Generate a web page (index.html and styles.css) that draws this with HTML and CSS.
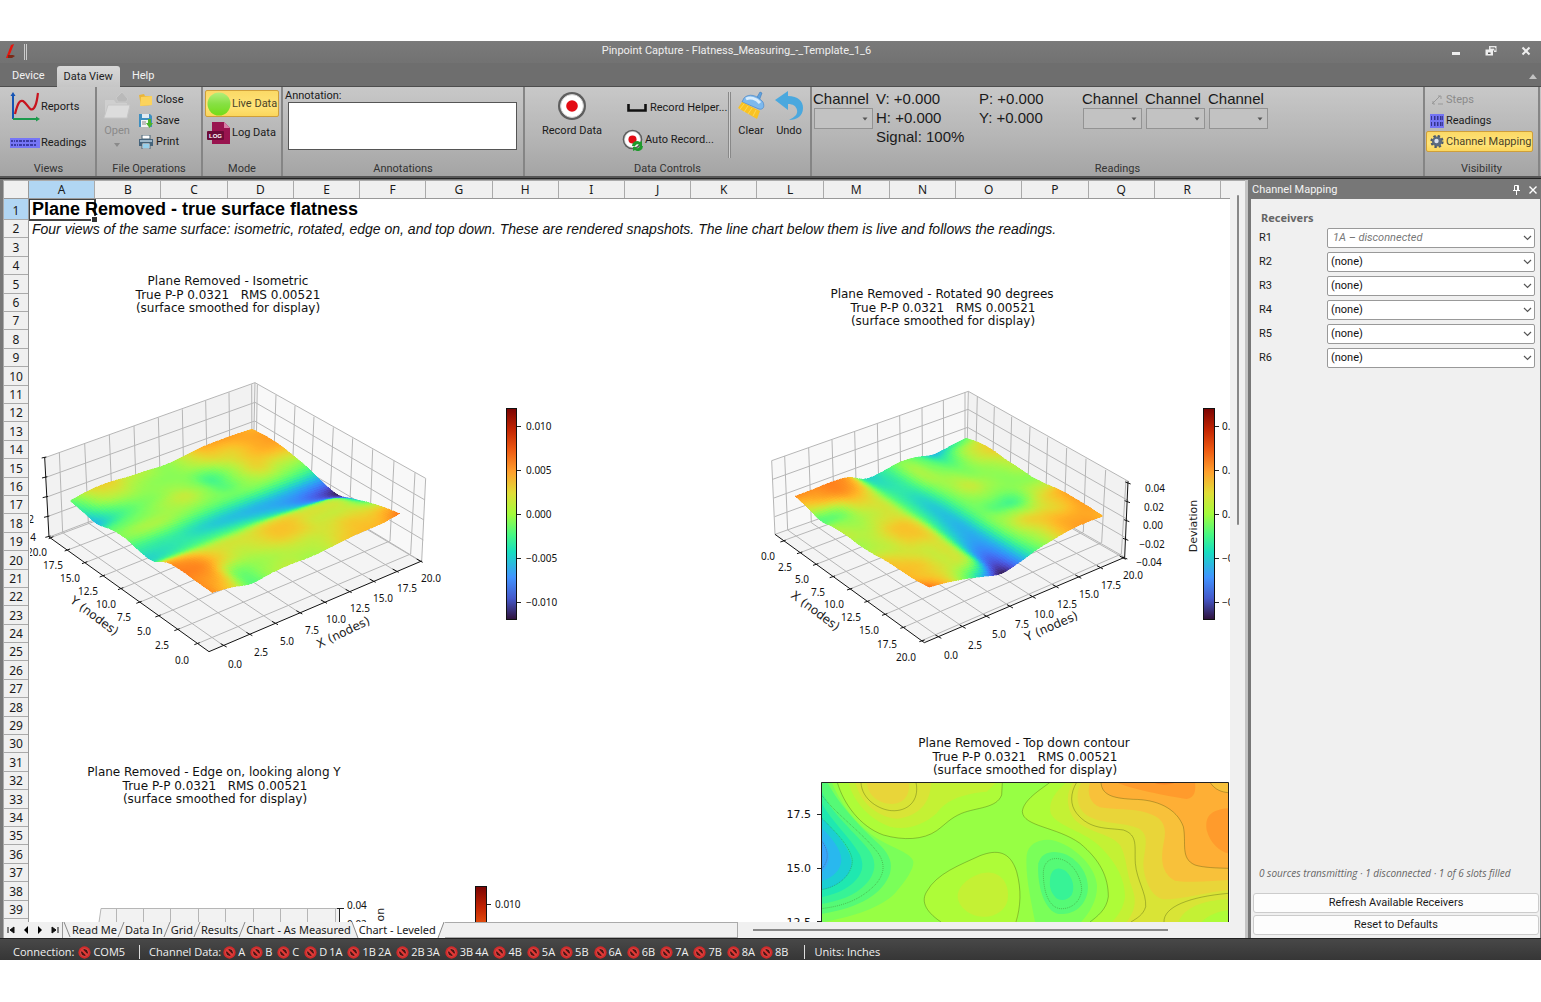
FILE: index.html
```html
<!DOCTYPE html>
<html lang="en">
<head>
<meta charset="utf-8">
<title>Pinpoint Capture - Flatness_Measuring_-_Template_1_6</title>
<link rel="stylesheet" href="styles.css">
</head>
<body>
<svg class="defs" width="0" height="0" aria-hidden="true">
  <defs>
    <linearGradient id="turbo" x1="0" y1="0" x2="0" y2="1">
      <stop offset="0" stop-color="#7a0403"/><stop offset=".1" stop-color="#c22402"/>
      <stop offset=".2" stop-color="#ee5b12"/><stop offset=".3" stop-color="#fe9f2d"/>
      <stop offset=".4" stop-color="#e1dd37"/><stop offset=".5" stop-color="#a4fc3c"/>
      <stop offset=".6" stop-color="#46f884"/><stop offset=".68" stop-color="#18dec0"/>
      <stop offset=".8" stop-color="#4294ff"/><stop offset=".9" stop-color="#4559cb"/>
      <stop offset="1" stop-color="#30123b"/>
    </linearGradient>
    <linearGradient id="ball" x1="0" y1="0" x2="0" y2="1"><stop offset="0" stop-color="#b4ee7c"/><stop offset=".5" stop-color="#86e043"/><stop offset="1" stop-color="#74dc18"/></linearGradient>
    <symbol id="blocked" viewBox="0 0 14 14">
      <circle cx="7" cy="7" r="6.6" fill="#d42a2a"/>
      <circle cx="7" cy="7" r="4.2" fill="#4a1313" stroke="#ee5a55" stroke-width="1"/>
      <path d="M3.8 3.8l6.4 6.4" stroke="#e23a36" stroke-width="2.4"/>
    </symbol>
    <symbol id="record" viewBox="0 0 30 30">
      <circle cx="15" cy="15" r="14" fill="#5e5e5e"/><circle cx="15" cy="15" r="11.4" fill="#fff"/>
      <circle cx="15" cy="15" r="11.4" fill="none" stroke="#d2d2d2"/><circle cx="15" cy="15" r="5.8" fill="#e30b13"/>
    </symbol>
    <symbol id="caret" viewBox="0 0 6 4"><path d="M0.5 0.5h5l-2.500 3z" fill="#555"/></symbol>
    <symbol id="chev" viewBox="0 0 9 6"><path d="M1 1l3.500 3.500L8 1" fill="none" stroke="#555" stroke-width="1.200"/></symbol>
    <clipPath id="contourClip"><rect x="123" y="157" width="1222" height="430"/></clipPath>
  </defs>
</svg>

<div class="app">
  <header class="titlebar">
    <div class="quick">
      <svg width="14" height="16" viewBox="0 0 14 16"><path d="M7 1L10 0 6.500 9 4 14 2 14z" fill="#e8140c"/><path d="M4 11l5 0 2 1-3 2-4 0z" fill="#7a2a18"/></svg>
      <span class="grip"></span>
    </div>
    <h1>Pinpoint Capture - Flatness_Measuring_-_Template_1_6</h1>
    <div class="winbtns">
      <button type="button" aria-label="Minimize"><svg width="12" height="12" viewBox="0 0 12 12"><path d="M2 6h8v3H2z" fill="#eee"/></svg></button>
      <button type="button" aria-label="Restore"><svg width="12" height="12" viewBox="0 0 12 12"><path d="M4 0h7.500v6H9V4.500H4z" fill="#e8e8e8"/><path d="M5.500 2h4.500v2.500" stroke="#555" fill="none"/><path d="M.5 3.500h7.500v6H.5z" fill="#eee"/><path d="M3 6.500h2.500v1.500H3z" fill="#555"/></svg></button>
      <button type="button" aria-label="Close window"><svg width="12" height="12" viewBox="0 0 12 12"><path d="M2.500 1.500l7 7M9.500 1.500l-7 7" stroke="#eee" stroke-width="2"/></svg></button>
    </div>
  </header>
  <nav class="tabs">
    <button type="button">Device</button>
    <button type="button" class="on">Data View</button>
    <button type="button">Help</button>
    <svg class="collapse" width="8" height="5" viewBox="0 0 8 5"><path d="M0 5l4-5 4 5z" fill="#c2c2c2"/></svg>
  </nav>

  <section class="ribbon">
    <div class="group g-views">
      <div class="body">
        <button type="button" class="cmd tall"><svg width="30" height="30" viewBox="0 0 30 30"><path d="M3 3v24" stroke="#1554b4" stroke-width="2"/><path d="M3 0l2.500 4h-5z" fill="#1554b4"/><path d="M3 27h24" stroke="#1c9a4c" stroke-width="2"/><path d="M30 27l-4-2.500v5z" fill="#1c9a4c"/><path d="M5 22C8 10 10 8 13 9c5 3 7 12 11 7 3-4 3-9 4-15" fill="none" stroke="#c8141e" stroke-width="2.200"/></svg>Reports</button>
        <button type="button" class="cmd tall"><svg width="30" height="10" viewBox="0 0 30 10"><path d="M0 0h30v10H0z" fill="#7676f6"/><path d="M1 3h2m1 0h1m1 0h2m1 0h3m1 0h2m1 0h3m1 0h3m1 0h2M1 7h2m1 0h2m1 0h1m1 0h3m1 0h2m1 0h3m1 0h3m1 0h2" stroke="#3c3ca4" stroke-width="2"/></svg>Readings</button>
      </div>
      <div class="caption">Views</div>
    </div>
    <div class="group g-file">
      <div class="body row">
        <button type="button" class="big" disabled><svg width="28" height="28" viewBox="0 0 28 28"><path d="M13 7l6-6 6 7-2 3h-8z" fill="#b9b9b9" stroke="#c9c9c9"/><path d="M2 9h9l2 3h11v14H2z" fill="#cfcfcf"/><path d="M5 14h22l-3 13H1z" fill="#dcdcdc" stroke="#c6c6c6"/></svg>Open<svg width="6" height="4"><path d="M0 0h6l-3 4z" fill="#8a8a8a"/></svg></button>
        <div class="stack">
          <button type="button" class="cmd"><svg width="14" height="14" viewBox="0 0 14 14"><path d="M0 2l5-1 1 2h7v9L2 13z" fill="#e9b53a"/><path d="M2 4l11-1v9L1 13z" fill="#fbd35c"/></svg>Close</button>
          <button type="button" class="cmd"><svg width="14" height="14" viewBox="0 0 14 14"><path d="M0 0h11l2 2v11H0z" fill="#3f8fc0"/><path d="M3 0h7v4H3z" fill="#dfeaf2"/><path d="M2 6h9v7H2z" fill="#f4f4f4"/><path d="M3 8h4m-4 2h4" stroke="#888"/><path d="M9 5h3v4h2l-3.500 5L7 9h2z" fill="#49b32c"/></svg>Save</button>
          <button type="button" class="cmd"><svg width="14" height="14" viewBox="0 0 14 14"><path d="M3 0h8v4H3z" fill="#fff" stroke="#4b6577"/><path d="M0 4h14v7H0z" fill="#45647c" /><path d="M1 5h12v2H1z" fill="#9db7c9"/><path d="M3 8h8v6H3z" fill="#fff" stroke="#4b6577"/><path d="M4 10h6m-6 2h6" stroke="#2fa1d8"/></svg>Print</button>
        </div>
      </div>
      <div class="caption">File Operations</div>
    </div>
    <div class="group g-mode">
      <div class="body">
        <button type="button" class="cmd mode active"><svg width="24" height="24" viewBox="0 0 24 24"><circle cx="12" cy="12" r="11.500" fill="url(#ball)"/></svg>Live Data</button>
        <button type="button" class="cmd mode"><svg width="24" height="24" viewBox="0 0 24 24"><path d="M5 1h12l6 6v16H5z" fill="#99144f"/><path d="M17 1v6h6z" fill="#d87ba6"/><rect x="0" y="10" width="17" height="9" rx="1" fill="#6d0b38"/><text x="8.500" y="17" class="logtxt">LOG</text></svg>Log Data</button>
      </div>
      <div class="caption">Mode</div>
    </div>
    <div class="group g-annot">
      <div class="body"><label for="annot">Annotation:</label><textarea id="annot"></textarea></div>
      <div class="caption">Annotations</div>
    </div>
    <div class="group g-data">
      <div class="body row">
        <button type="button" class="big rec"><svg width="30" height="30"><use href="#record"/></svg>Record Data</button>
        <div class="stack helpers">
          <button type="button" class="cmd helper"><svg width="20" height="8" viewBox="0 0 20 8"><path d="M1.500 0v6.500h17V0" fill="none" stroke="#111" stroke-width="2.600"/></svg>Record Helper...</button>
          <button type="button" class="cmd auto"><svg width="22" height="22" viewBox="0 0 22 22"><use href="#record" width="21" height="21"/><path d="M10 17a5 5 0 0 1 8-4l2-1v5h-4l1-1.500a3 3 0 0 0-4 2zM21 17a5 5 0 0 1-8 4l-2 1v-4h4l-1 1a3 3 0 0 0 4-2z" fill="#1f9a2c"/></svg>Auto Record...</button>
        </div>
        <div class="vsep"></div>
        <button type="button" class="big"><svg width="28" height="30" viewBox="0 0 28 30"><path d="M19 8l4-7 2 1-3 8z" fill="#5ea3de" stroke="#3a78bd" stroke-width=".6"/><path d="M7 7c5-5 13-3 19 4 2 5 0 8-4 7L5 11z" fill="#7db9ee" stroke="#4a88c9" stroke-width=".7"/><path d="M9 8c4-2 10-1 14 4" stroke="#d8ecfc" stroke-width="3" fill="none"/><path d="M5 11l18 9-3 8L1 17z" fill="#f9c222"/><path d="M7 13l-4 5m8-3l-4 6m8-4l-4 6m8-4l-3 6" stroke="#ffdc60" stroke-width=".8"/></svg>Clear</button>
        <button type="button" class="big"><svg width="28" height="30" viewBox="0 0 28 30"><path d="M0 9L13 0v5c10 0 15 5 15 12 0 8-6 12-14 12 6-3 9-6 8-10-1-4-4-6-9-6v6z" fill="#4aa8de"/></svg>Undo</button>
      </div>
      <div class="caption">Data Controls</div>
    </div>
    <div class="group g-read">
      <div class="body row readings">
        <label class="chan">Channel<span class="pick"><select></select><svg width="6" height="4"><use href="#caret"/></svg></span></label>
        <div class="vals"><span>V: +0.000</span><span>H: +0.000</span><span>Signal: 100%</span></div>
        <div class="vals py"><span>P: +0.000</span><span>Y: +0.000</span></div>
        <label class="chan">Channel<span class="pick"><select></select><svg width="6" height="4"><use href="#caret"/></svg></span></label>
        <label class="chan">Channel<span class="pick"><select></select><svg width="6" height="4"><use href="#caret"/></svg></span></label>
        <label class="chan">Channel<span class="pick"><select></select><svg width="6" height="4"><use href="#caret"/></svg></span></label>
      </div>
      <div class="caption">Readings</div>
    </div>
    <div class="group g-vis">
      <div class="body stack">
        <button type="button" class="cmd" disabled><svg width="14" height="14" viewBox="0 0 14 14"><path d="M2 11l8-8M8 3h3v3M3 8v3h2M8 11h5" stroke="#999" fill="none"/></svg>Steps</button>
        <button type="button" class="cmd"><svg width="14" height="14" viewBox="0 0 14 14"><path d="M0 0h14v14H0z" fill="#7474f4"/><path d="M1 4h1m2 0h2m1 0h2m1 0h3M1 10h1m2 0h2m1 0h2m1 0h3" stroke="#34348c" stroke-width="4" stroke-dasharray="1.500 .7"/></svg>Readings</button>
        <button type="button" class="cmd active"><svg width="14" height="14" viewBox="0 0 14 14"><circle cx="7" cy="6.500" r="5" fill="#5b6b80"/><circle cx="7" cy="6.500" r="5.600" fill="none" stroke="#4b5a6e" stroke-width="2" stroke-dasharray="2.400 2"/><circle cx="6.500" cy="6" r="2.200" fill="#dbe3ee"/></svg>Channel Mapping</button>
      </div>
      <div class="caption">Visibility</div>
    </div>
  </section>

  <main class="work">
    <section class="book">
      <div class="sheet">
        <div class="corner"></div>
        <div class="cols" id="cols"></div>
        <div class="rows" id="rows"></div>
        <div class="cells">
          <div class="a1"></div>
          <p class="heading">Plane Removed - true surface flatness</p>
          <p class="note">Four views of the same surface: isometric, rotated, edge on, and top down. These are rendered snapshots. The line chart below them is live and follows the readings.</p>

          <svg class="chart iso" width="640" height="430" viewBox="30 260 640 430">
            <g class="title"><text x="228" y="285">Plane Removed - Isometric</text><text x="228" y="299">True P-P 0.0321 &#160; RMS 0.00521</text><text x="228" y="312">(surface smoothed for display)</text></g>
            <g transform="translate(20 370) scale(.33333)">
              <path class="wall" d="M75 263L705 38L700 268L88 501z"/><path class="wall2" d="M705 38L1217 325L1205 575L700 268z"/><path class="floor" d="M88 501L567 845L1205 575L700 268z"/>
              <path class="grid" d="M75 263L705 38L1217 325M75 323L705 97L1215 390M78 382L704 153L1212 450M82 440L703 210L1210 510M88 501L700 268L1205 575M705 38L700 268
                M118 247L128 488L611 827M194 220L205 459L688 793M268 195L278 432L765 760M342 168L350 404L838 728M415 143L422 377L912 696M487 118L492 350L986 664M557 92L562 323L1058 633M627 67L630 297L1127 603M695 43L696 272L1200 573
                M712 43L708 274L92 503M768 75L760 305L143 540M825 107L816 336L195 578M882 140L872 370L248 618M940 172L929 404L303 656M998 205L988 440L358 697M1058 238L1049 476L415 738M1122 272L1110 513L472 779M1185 308L1172 552L532 821M1217 325L1205 575"/>
              <g class="surface" data-view="iso"></g>
              <path class="axis" d="M74 262L87 501L567 845L1205 573
                M65 264l14-3M66 324l16-4M68 383l16-4M72 442l16-4M76 502l16-4
                M523 824l16-6M463 782l16-6M406 741l16-6M349 700l16-6M294 659l16-6M239 621l16-6M186 581l16-6M134 543l16-6M86 506l14-6
                M602 821l18 10M679 787l18 10M756 754l18 10M829 722l18 10M903 690l18 10M977 658l18 10M1049 627l18 10M1118 597l18 10M1190 567l18 10"/>
            </g>
            <g class="tick mid">
              <text x="37" y="556">20.0</text><text x="53" y="569">17.5</text><text x="70" y="582">15.0</text><text x="88" y="595">12.5</text><text x="106" y="608">10.0</text><text x="124" y="621">7.5</text><text x="144" y="635">5.0</text><text x="162" y="649">2.5</text><text x="182" y="664">0.0</text>
              <text x="235" y="668">0.0</text><text x="261" y="656">2.5</text><text x="287" y="645">5.0</text><text x="312" y="634">7.5</text><text x="336" y="623">10.0</text><text x="360" y="612">12.5</text><text x="383" y="602">15.0</text><text x="407" y="592">17.5</text><text x="431" y="582">20.0</text>
            </g>
            <g class="tick end"><text x="34" y="523">2</text><text x="36" y="541">4</text></g>
            <g class="name"><text transform="translate(345 636) rotate(-26)">X (nodes)</text><text transform="translate(92 619) rotate(37)">Y (nodes)</text></g>
            <rect class="bar" x="506.500" y="408.500" width="10" height="211"/>
            <path class="barticks" d="M517 426.500h4M517 470.500h4M517 514.500h4M517 558.500h4M517 602.500h4"/>
            <g class="tick"><text x="526" y="430">0.010</text><text x="526" y="474">0.005</text><text x="526" y="518">0.000</text><text x="526" y="562">−0.005</text><text x="526" y="606">−0.010</text></g>
          </svg>

          <svg class="chart rot" width="500" height="430" viewBox="740 260 500 430">
            <g class="title"><text x="942" y="298">Plane Removed - Rotated 90 degrees</text><text x="943" y="312">True P-P 0.0321 &#160; RMS 0.00521</text><text x="943" y="325">(surface smoothed for display)</text></g>
            <g transform="translate(750 370) scale(.33333)">
              <path class="wall2" d="M65 272L655 64L650 290L75 493z"/><path class="wall" d="M655 64L1137 335L1125 562L650 290z"/><path class="floor" d="M75 493L523 818L1125 562L650 290z"/>
              <path class="grid" d="M65 272L655 64L1137 335M68 328L654 118L1135 392M72 384L653 172L1132 448M74 440L651 228L1130 505M75 493L650 290L1125 562M655 64L650 290M65 272L75 493
                M104 258L113 480L565 800M176 234L184 458L638 770M246 209L253 432L710 739M314 185L320 408L780 709M382 160L387 384L848 680M449 137L453 361L917 649M516 114L518 337L985 620M580 90L582 314L1050 592M645 67L645 292L1118 562
                M682 80L676 303L100 512M733 110L727 331L150 548M785 140L779 361L198 583M840 170L832 392L248 620M893 202L886 422L300 657M950 234L942 453L352 694M1008 266L1000 486L405 733M1067 300L1055 518L460 772M1128 330L1114 552L515 812"/>
              <g class="surface" data-view="rot"></g>
              <path class="axis" d="M1134 334L1124 562L523 818L75 493
                M1126 336l16 6M1124 392l16 6M1122 449l16 6M1119 505l16 6M1116 561l16 6
                M91 516l16-5M141 551l16-5M189 586l16-5M239 623l16-5M291 660l16-5M343 697l16-5M396 736l16-5M451 775l16-5M508 815l16-5
                M556 795l18 10M629 765l18 10M701 734l18 10M771 704l18 10M839 675l18 10M908 644l18 10M976 615l18 10M1041 587l18 10M1109 558l18 10"/>
            </g>
            <g class="tick mid">
              <text x="768" y="560">0.0</text><text x="785" y="571">2.5</text><text x="802" y="583">5.0</text><text x="818" y="596">7.5</text><text x="834" y="608">10.0</text><text x="851" y="621">12.5</text><text x="869" y="634">15.0</text><text x="887" y="648">17.5</text><text x="906" y="661">20.0</text>
              <text x="951" y="659">0.0</text><text x="975" y="649">2.5</text><text x="999" y="638">5.0</text><text x="1022" y="628">7.5</text><text x="1044" y="618">10.0</text><text x="1067" y="608">12.5</text><text x="1089" y="598">15.0</text><text x="1111" y="589">17.5</text><text x="1133" y="579">20.0</text>
              <text x="1155" y="492">0.04</text><text x="1154" y="511">0.02</text><text x="1153" y="529">0.00</text><text x="1152" y="548">−0.02</text><text x="1149" y="566">−0.04</text>
            </g>
            <g class="name"><text transform="translate(813 614) rotate(37)">X (nodes)</text><text transform="translate(1053 630) rotate(-24)">Y (nodes)</text><text transform="translate(1197 526) rotate(-90)" class="dev">Deviation</text></g>
            <rect class="bar" x="1203.500" y="408.500" width="11" height="211"/>
            <path class="barticks" d="M1215 426.500h4M1215 470.500h4M1215 514.500h4M1215 558.500h4M1215 602.500h4"/>
            <g class="tick"><text x="1222" y="430">0.010</text><text x="1222" y="474">0.005</text><text x="1222" y="518">0.000</text><text x="1222" y="562">−0.005</text><text x="1222" y="606">−0.010</text></g>
          </svg>

          <svg class="chart edge" width="640" height="240" viewBox="30 740 640 240">
            <g class="title"><text x="214" y="776">Plane Removed - Edge on, looking along Y</text><text x="215" y="790">True P-P 0.0321 &#160; RMS 0.00521</text><text x="215" y="803">(surface smoothed for display)</text></g>
            <path class="wall" d="M101 908H339V980H90z"/>
            <path class="gridpx" d="M97 936L101 908.500H339M116.500 908v70M143.500 908v70M170.500 908v70M198.500 908v70M225.500 908v70M253.500 908v70M280.500 908v70M307.500 908v70M335.500 908v70"/>
            <path class="barticks" d="M339.500 908v70M337 908.500h7"/>
            <g class="tick"><text x="347" y="909">0.04</text><text x="347" y="928">0.02</text></g>
            <g class="name"><text transform="translate(384 934) rotate(-90)" class="dev">Deviation</text></g>
            <rect class="bar" x="475.500" y="886.500" width="11" height="211"/>
            <path class="barticks" d="M487 904.500h4"/>
            <g class="tick"><text x="495" y="908">0.010</text></g>
          </svg>

          <svg class="chart top" width="480" height="220" viewBox="780 730 480 220">
            <g class="title"><text x="1024" y="747">Plane Removed - Top down contour</text><text x="1025" y="761">True P-P 0.0321 &#160; RMS 0.00521</text><text x="1025" y="774">(surface smoothed for display)</text></g>
            <g transform="translate(780 730) scale(.33333)" clip-path="url(#contourClip)">
              <path fill="#97ff44" d="M123 157H1345V590H123z"/>
              <path fill="#7aff59" d="M123 157H155C190 240 240 290 290 325C340 355 395 370 400 395C402 415 380 450 345 490C300 535 220 560 123 578z"/>
              <path fill="#55fa76" d="M123 157H142C180 230 250 300 300 345C330 375 338 400 330 430C310 490 240 535 123 552z"/>
              <path fill="#37f396" d="M123 178C150 250 230 310 270 365C292 400 285 430 260 460C225 500 170 515 123 522z"/>
              <path fill="#1fe8b0" d="M123 215C150 270 210 320 240 375C255 410 245 435 220 458C190 485 160 492 123 502z"/>
              <path fill="#1bcfd2" d="M123 262C160 300 205 345 214 390C220 430 180 470 123 480z"/>
              <path fill="#29b8ee" d="M123 292C155 325 182 355 184 388C184 420 160 443 123 454z"/>
              <path fill="#39a5fb" d="M123 324C142 345 148 370 146 388C144 405 135 418 123 428z"/>
              <path fill="#aefc38" d="M172 157C190 220 240 290 310 315C370 332 430 330 470 302C500 280 510 265 545 250C590 232 650 235 665 195L667 157z"/>
              <path fill="#c4f134" d="M205 157C220 215 270 270 330 290C380 303 430 285 470 250C500 205 560 190 620 185L650 157z"/>
              <path fill="#d9e436" d="M226 157C240 215 290 262 350 266C410 262 455 220 452 157z"/>
              <path fill="#e9d539" d="M260 157C265 200 300 222 335 222C370 222 392 195 386 157z"/>
              <path fill="#aefc38" d="M483 576C430 540 425 510 440 485C470 430 540 405 600 377C650 358 690 362 710 425C725 480 722 530 708 590H500z"/>
              <path fill="#c4f134" d="M533 498C535 460 590 425 630 428C670 430 690 470 683 510C675 545 640 562 610 560C570 560 533 530 533 498z"/>
              <path fill="#7aff59" d="M740 375C745 340 780 325 815 330C880 345 945 405 951 465C953 520 920 560 890 590H768C755 520 735 440 740 375z"/>
              <path fill="#55fa76" d="M775 400C785 365 820 358 860 374C910 400 930 450 922 490C910 540 870 555 835 552C795 545 770 470 775 400z"/>
              <path fill="#37f396" d="M810 450C812 415 835 408 858 424C880 445 885 475 875 495C860 515 835 513 825 500C812 485 808 470 810 450z"/>
              <path fill="#aefc38" d="M810 157C780 180 730 210 727 245C730 290 830 290 900 340C960 390 985 440 985 500C980 540 950 560 920 590H1345V157z"/>
              <path fill="#c4f134" d="M860 157C820 190 805 220 812 250C830 290 920 305 965 355C1010 400 1035 450 1035 500C1030 540 1010 560 985 590H1345V157z"/>
              <path fill="#d9e436" d="M880 157C855 190 860 240 885 270C930 310 990 310 1020 345C1040 380 1040 430 1055 470C1070 510 1070 540 1030 590H1345V157z"/>
              <path fill="#e9d539" d="M905 157C885 190 890 230 915 252C960 285 1030 275 1075 295C1110 315 1095 350 1090 400C1090 440 1110 500 1150 508C1220 508 1280 485 1345 480V157z"/>
              <path fill="#f8c13a" d="M930 157C920 190 930 220 960 232C1000 240 1060 235 1100 248C1160 265 1160 300 1150 345C1142 390 1145 430 1185 452C1240 460 1300 452 1345 450V157z"/>
              <path fill="#feaf35" d="M963 157C965 200 1010 205 1060 208C1130 208 1190 235 1210 290C1220 340 1200 385 1245 405C1270 413 1310 414 1345 415V157z"/>
              <path fill="#ff9b2c" d="M1010 157C1040 175 1170 200 1220 207C1245 205 1248 180 1245 157zM1345 235C1290 240 1275 260 1280 300C1290 340 1320 365 1345 370z"/>
              <path fill="#fb8524" d="M1118 157C1140 166 1165 166 1190 157z"/>
              <path fill="#f8c13a" d="M1290 157C1305 180 1325 186 1345 188V157z"/>
              <path fill="#c4f134" d="M1190 590C1200 540 1260 510 1345 508V590z"/><path fill="#aefc38" d="M1255 590C1270 560 1310 545 1345 540V590z"/>
              <path class="iso-line" d="M172 157C190 220 240 290 310 315C370 332 430 330 470 302C500 280 510 265 545 250C590 232 650 235 665 195L667 157M243 157C245 210 300 240 335 242C380 245 420 215 408 157M483 576C430 540 425 510 440 485C470 430 540 405 600 377C650 358 690 362 710 425C725 480 722 530 708 576M810 157C780 180 730 210 727 245C730 290 830 290 900 340C960 390 985 440 985 500C980 540 950 560 930 576M890 157C870 190 870 225 890 250C930 300 980 293 1030 300C1075 315 1063 350 1066 400C1070 450 1100 490 1097 530C1090 555 1070 565 1053 576M963 157C965 200 1010 205 1060 208C1130 208 1190 235 1210 290C1220 340 1200 385 1245 405C1270 413 1310 414 1345 415M1290 157C1305 180 1325 186 1345 188M1152 576C1150 530 1230 500 1345 490"/>
              <path class="iso-line dash" d="M123 193C170 255 250 310 295 370C318 405 312 435 285 465C240 510 190 528 123 536M123 262C160 300 210 345 217 390C218 430 180 470 123 479M123 330C150 365 145 395 125 417M790 430C790 390 820 378 850 390C885 405 905 450 905 480C900 520 870 538 840 536C800 530 790 470 790 430z"/>
            </g>
            <path class="barticks" d="M821.500 930V782.500H1228.500V930M817 814.500h4M817 868.500h4M817 921.500h4"/>
            <g class="ctick end"><text x="811" y="818">17.5</text><text x="811" y="872">15.0</text><text x="811" y="926">12.5</text></g>
          </svg>
        </div>
      </div>
      <div class="vscroll"><span></span></div>
      <div class="sheettabs">
        <div class="steps">
          <button type="button" aria-label="First sheet"><svg width="8" height="8"><path d="M1 1v6M7 1v6L3 4z" stroke="#111" fill="#111" stroke-width="1"/></svg></button>
          <button type="button" aria-label="Previous sheet"><svg width="8" height="8"><path d="M6 0v8L2 4z"/></svg></button>
          <button type="button" aria-label="Next sheet"><svg width="8" height="8"><path d="M2 0v8l4-4z"/></svg></button>
          <button type="button" aria-label="Last sheet"><svg width="8" height="8"><path d="M7 1v6M1 1v6l4-3z" stroke="#111" fill="#111" stroke-width="1"/></svg></button>
        </div>
        <svg class="cut" width="9" height="16"><path d="M1 0l6 15"/></svg>
        <button type="button">Read Me</button><svg class="cut" width="8" height="16"><path d="M1 15L7 0"/></svg>
        <button type="button">Data In</button><svg class="cut" width="8" height="16"><path d="M1 15L7 0"/></svg>
        <button type="button">Grid</button><svg class="cut" width="8" height="16"><path d="M1 15L7 0"/></svg>
        <button type="button">Results</button><svg class="cut" width="8" height="16"><path d="M1 15L7 0"/></svg>
        <button type="button">Chart - As Measured</button><svg class="cut act" width="8" height="16"><path d="M1 0l6 16h2V0z" class="fillonly"/><path d="M1 0l6 16"/></svg>
        <button type="button" class="on">Chart - Leveled</button><svg class="cut act" width="9" height="16"><path d="M8 0L2 16H0V0z" class="fillonly"/><path d="M8 0L2 16"/></svg>
        <span class="rest"></span>
        <span class="hscroll"><i></i></span>
      </div>
    </section>

    <aside class="panel">
      <header><h2>Channel Mapping</h2>
        <button type="button" aria-label="Pin"><svg width="9" height="10" viewBox="0 0 9 10"><path d="M2.500.5h4v5M2.500.5v5M1 5.500h7M4.500 5.500V10M5.500 1v4" stroke="#fff" fill="none"/></svg></button>
        <button type="button" aria-label="Close panel"><svg width="8" height="8" viewBox="0 0 8 8"><path d="M.5.5l7 7M7.500.5l-7 7" stroke="#fff" stroke-width="1.400"/></svg></button>
      </header>
      <div class="pbody">
        <h3>Receivers</h3>
        <div class="map"><label for="r1">R1</label><span class="pick"><select id="r1" class="off"><option>1A – disconnected</option></select><svg width="9" height="6"><use href="#chev"/></svg></span></div>
        <div class="map"><label for="r2">R2</label><span class="pick"><select id="r2"><option>(none)</option></select><svg width="9" height="6"><use href="#chev"/></svg></span></div>
        <div class="map"><label for="r3">R3</label><span class="pick"><select id="r3"><option>(none)</option></select><svg width="9" height="6"><use href="#chev"/></svg></span></div>
        <div class="map"><label for="r4">R4</label><span class="pick"><select id="r4"><option>(none)</option></select><svg width="9" height="6"><use href="#chev"/></svg></span></div>
        <div class="map"><label for="r5">R5</label><span class="pick"><select id="r5"><option>(none)</option></select><svg width="9" height="6"><use href="#chev"/></svg></span></div>
        <div class="map"><label for="r6">R6</label><span class="pick"><select id="r6"><option>(none)</option></select><svg width="9" height="6"><use href="#chev"/></svg></span></div>
        <p class="summary">0 sources transmitting · 1 disconnected · 1 of 6 slots filled</p>
        <button type="button" class="wide">Refresh Available Receivers</button>
        <button type="button" class="wide">Reset to Defaults</button>
      </div>
    </aside>
  </main>

  <footer class="status">
    <span>Connection:</span>
    <span class="it com"><svg><use href="#blocked"/></svg>COM5</span>
    <i class="bar-sep"></i>
    <span class="cd">Channel Data:</span>
    <span class="it"><svg><use href="#blocked"/></svg>A</span>
    <span class="it"><svg><use href="#blocked"/></svg>B</span>
    <span class="it"><svg><use href="#blocked"/></svg>C</span>
    <span class="it"><svg><use href="#blocked"/></svg>D<span>1A</span></span>
    <span class="it"><svg><use href="#blocked"/></svg>1B<span>2A</span></span>
    <span class="it"><svg><use href="#blocked"/></svg>2B<span>3A</span></span>
    <span class="it"><svg><use href="#blocked"/></svg>3B<span>4A</span></span>
    <span class="it"><svg><use href="#blocked"/></svg>4B</span>
    <span class="it"><svg><use href="#blocked"/></svg>5A</span>
    <span class="it"><svg><use href="#blocked"/></svg>5B</span>
    <span class="it"><svg><use href="#blocked"/></svg>6A</span>
    <span class="it"><svg><use href="#blocked"/></svg>6B</span>
    <span class="it"><svg><use href="#blocked"/></svg>7A</span>
    <span class="it"><svg><use href="#blocked"/></svg>7B</span>
    <span class="it"><svg><use href="#blocked"/></svg>8A</span>
    <span class="it"><svg><use href="#blocked"/></svg>8B</span>
    <i class="bar-sep"></i>
    <span>Units: Inches</span>
  </footer>
</div>
<script src="sheet.js"></script>
</body>
</html>
```
FILE: styles.css
```css
* { box-sizing: border-box; }
body { margin: 0; background: #fff; font: 11px/14px Roboto, "Liberation Sans", sans-serif; color: #1a1a1a; }
button { font: inherit; color: inherit; border: 0; background: none; padding: 0; }
h1, h2, h3, p { margin: 0; font-weight: normal; }
svg { display: block; flex: none; }
.defs { position: absolute; }
.app { margin: 41px 0 42px; height: calc(100vh - 83px); display: flex; flex-direction: column; background: #777; }

.titlebar { display: grid; grid-template-columns: 1fr auto 1fr; align-items: center; height: 22px; background: linear-gradient(#7a7a7a, #727272); color: #eee; flex: none; padding-right: 68px; }
.titlebar h1 { font-size: 11px; line-height: 20px; align-self: start; }
.quick { display: flex; gap: 6px; padding-left: 4px; align-items: center; }
.grip { width: 3px; height: 16px; border: 1px solid #ccc; border-width: 0 1px; }
.winbtns { display: flex; justify-content: flex-end; gap: 23px; margin-right: -59px; }
.tabs { display: flex; align-items: flex-end; height: 24px; flex: none; padding: 0 4px 0 12px; background: #6e6e6e; border-bottom: 1px solid #4e4e4e; color: #f2f2f2; }
.tabs button { height: 20px; margin-right: 12px; }
.tabs .on { background: linear-gradient(#d8d8d8, #c6c6c6); color: #222; padding: 0 7px; border-radius: 3px 3px 0 0; margin-bottom: -1px; height: 21px; }
.collapse { margin: 0 0 7px auto; }

.ribbon { display: flex; height: 91px; flex: none; padding: 0 1px 0 2px; background: linear-gradient(#c8c8c8, #b4b4b4 60%, #a4a4a4); border-bottom: 2px solid #555; }
.group { display: flex; flex-direction: column; justify-content: space-between; border-right: 2px solid #858585; flex: none; padding: 2px 0 0; }
.caption { text-align: center; line-height: 14px; color: #333; }
.g-views { width: 95px; } .g-file { width: 106px; } .g-mode { width: 80px; } .g-annot { width: 242px; } .g-data { width: 287px; } .g-read { flex: 1; } .g-vis { width: 115px; }
.row { display: flex; }
.cmd { display: flex; align-items: center; gap: 3px; height: 21px; white-space: nowrap; }
.cmd:disabled, .big:disabled { color: #8a8a8a; }
.tall { height: 36px; padding-left: 8px; gap: 1px; }
.big { display: flex; flex-direction: column; align-items: center; gap: 3px; width: 38px; height: 66px; padding-top: 2px; line-height: 14px; }
.g-file .body { padding-left: 1px; gap: 3px; }
.g-file .big { gap: 5px; }
.g-mode .body { padding: 1px 2px; }
.mode { width: 74px; height: 27px; padding-left: 2px; gap: 1px; margin-bottom: 2px; border-radius: 2px; }
.mode.active { padding-left: 1px; }
.active { background: linear-gradient(#fbd966, #ffe479 60%, #fbd65c); border: 1px solid #cf9f3a; border-radius: 2px; color: #4b4327; }
.logtxt { font: bold 6px "Liberation Sans", sans-serif; fill: #fff; text-anchor: middle; }
.g-annot .body { display: flex; flex-direction: column; padding: 0 6px 0 2px; }
.g-annot textarea { height: 48px; margin-left: 3px; margin-top: -1px; border: 1px solid #555; background: #fff; resize: none; padding: 2px; }
.rec { width: 92px; margin-left: 1px; }
.helpers { padding: 3px 0 0 4px; width: 111px; }
.helper { height: 32px; gap: 3px; padding-left: 5px; } .auto { height: 32px; gap: 1px; }
.vsep { width: 3px; height: 66px; margin: 3px 1px 0 -1px; border: 1px solid #888; border-width: 0 1px; background: #d0d0d0; }
.readings { font: 15px/19px "Liberation Sans", Arial, sans-serif; padding-left: 1px; }
.chan { width: 63px; display: flex; flex-direction: column; }
.pick { display: grid; align-items: center; }
.pick > * { grid-area: 1 / 1; }
.pick svg { justify-self: end; pointer-events: none; }
.chan .pick { width: 59px; margin-left: 1px; }
.chan select { appearance: none; height: 21px; border: 1px solid #939393; background: #c2c2c2; border-radius: 0; }
.chan svg { margin-right: 5px; }
.vals { display: flex; flex-direction: column; width: 103px; white-space: nowrap; }
.g-vis .body { padding-left: 1px; }
.g-vis .cmd { padding-left: 4px; gap: 2px; }
.g-vis .active { width: 107px; padding-left: 3px; }

.work { display: flex; flex: 1; min-height: 0; padding: 1px 1px 0 3px; background: #777; border-top: 1px solid #222; }
.book { flex: 1; min-width: 0; display: grid; grid-template: minmax(0, 1fr) 16px / minmax(0, 1fr) 15px; background: #f0f0f0; border: 1px solid #aaa; border-width: 1px 0 0 1px; }
.sheet { display: grid; grid-template: 18px minmax(0, 1fr) / 25px minmax(0, 1fr); font: 12px/17px "Noto Sans", sans-serif; background: #fff; }
.corner { border-right: 1px solid #999; border-bottom: 1px solid #999; background: #f0f0f0; }
.cols { display: grid; grid-template-columns: repeat(18, 22fr) 3fr; text-align: center; background: #f0f0f0; border-bottom: 1px solid #999; }
.cols span { border-right: 1px solid #aaa; overflow: hidden; }
.rows { display: grid; grid-template-rows: 21px repeat(38, minmax(0, 1fr)) 3px; text-align: center; background: #f0f0f0; border-right: 1px solid #999; overflow: hidden; }
.rows span { border-bottom: 1px solid #aaa; display: flex; align-items: flex-end; justify-content: center; }
.cols .sel, .rows .sel { background: #b1d6f3; }
.cells { position: relative; overflow: hidden; background: #fff; }
.a1 { position: absolute; left: 0; top: 0; width: 67px; height: 22px; border: 2px solid #444; border-width: 1px 2px 2px 1px; }
.a1::after { content: ""; position: absolute; right: -3px; bottom: -3px; width: 5px; height: 5px; background: #333; border: 1px solid #fff; border-width: 1px 0 0 1px; }
.heading { position: relative; font: bold 18px/20px "Liberation Sans", Arial, sans-serif; padding-left: 3px; white-space: nowrap; color: #000; }
.note { position: relative; font: italic 14px/20px "Liberation Sans", Arial, sans-serif; padding-left: 3px; white-space: nowrap; color: #111; }
.chart { position: absolute; }
.iso { left: 1px; top: 61px; } .rot { left: 711px; top: 61px; } .edge { left: 1px; top: 541px; } .top { left: 751px; top: 531px; }
.title { font: 12px "DejaVu Sans", sans-serif; text-anchor: middle; fill: #111; white-space: pre; }
.name { font: 12px "DejaVu Sans", sans-serif; text-anchor: middle; fill: #222; }
.name .dev { font-size: 11px; }
.tick { font: 10px "Noto Sans", sans-serif; fill: #111; }
.ctick { font: 11px "DejaVu Sans", sans-serif; fill: #111; }
.mid { text-anchor: middle; } .end { text-anchor: end; }
.wall { fill: #f2f2f2; } .wall2 { fill: #f8f8f8; } .floor { fill: #f4f4f4; }
.grid { fill: none; stroke: #b6b6b6; stroke-width: 3; }
.gridpx { fill: none; stroke: #b6b6b6; }
.axis { fill: none; stroke: #111; stroke-width: 3; }
.surface { shape-rendering: crispEdges; }
.bar { fill: url(#turbo); stroke: #111; }
.barticks { fill: none; stroke: #222; }
.iso-line { fill: none; stroke: #3b4a10; stroke-opacity: .5; stroke-width: 2; }
.dash { stroke-dasharray: 3 3; }
.vscroll { padding: 14px 0 0 7px; }
.vscroll span { display: block; width: 2px; height: 330px; background: #888; border-radius: 1px; }
.sheettabs { grid-column: 1 / 3; display: flex; font: 11px/16px "Noto Sans", sans-serif; background: #f0f0f0; white-space: nowrap; }
.steps { display: flex; width: 59px; align-items: center; justify-content: space-around; border-right: 1px solid #999; }
.cut path { fill: none; stroke: #888; }
.cut .fillonly { fill: #fff; stroke: none; }
.sheettabs .on { background: #fff; }
.rest { width: 293px; border: 1px solid #aaa; border-left: 0; }
.hscroll { flex: 1; padding: 7px 77px 0 15px; }
.hscroll i { display: block; height: 2px; background: #888; }

.panel { width: 295px; flex: none; border-left: 3px solid #c4c4c4; display: flex; flex-direction: column; background: #777; }
.panel header { display: flex; align-items: center; height: 19px; color: #f4f4f4; padding: 0 3px 0 4px; gap: 8px; }
.panel h2 { font-size: 11px; flex: 1; }
.pbody { flex: 1; display: flex; flex-direction: column; gap: 4px; margin-left: 3px; padding: 11px 1px 3px 2px; background: #f0f0f0; }
.pbody h3 { font: bold 11px/16px "Noto Sans", sans-serif; color: #666; padding-left: 8px; margin-bottom: -2px; }
.map { display: flex; align-items: center; height: 20px; padding: 0 4px 0 6px; }
.map label { width: 68px; }
.map .pick { flex: 1; }
.map select { appearance: none; width: 100%; height: 20px; border: 1px solid #999; border-radius: 2px; background: #fff; padding: 0 3px; font: inherit; color: #111; }
.map .off { color: #777; font-style: italic; padding-left: 5px; }
.map svg { margin-right: 3px; }
.summary { margin-top: auto; padding: 0 0 8px 6px; font: italic 10px/16px "Open Sans", "Noto Sans", sans-serif; color: #666; }
.wide { height: 20px; background: #fdfdfd; border: 1px solid #ccc; border-radius: 3px; margin-bottom: -2px; }
.wide:last-child { margin-bottom: 0; }

.status { display: flex; align-items: center; height: 22px; flex: none; border-top: 1px solid #222; background: linear-gradient(#484848, #363636); color: #f0f0f0; padding: 5px 13px 0; font: 11px/16px "Open Sans", "Noto Sans", sans-serif; white-space: nowrap; }
.status svg { width: 13px; height: 13px; }
.it { display: flex; align-items: center; gap: 2px; margin-right: 5px; }
.com { margin-left: 4px; margin-right: 14px; }
.cd { margin-right: 2px; }
.bar-sep { width: 1px; height: 14px; background: #ddd; margin-right: 9px; }
.it + .bar-sep { margin-left: 11px; }
.com + .bar-sep { margin-left: 0; }
```
FILE: sheet.js
```js
// Column and row headers
const cols = document.getElementById('cols');
for (const c of 'ABCDEFGHIJKLMNOPQR') {
  const s = document.createElement('span');
  s.textContent = c;
  if (c === 'A') s.className = 'sel';
  cols.append(s);
}
const rows = document.getElementById('rows');
for (let r = 1; r <= 39; r++) {
  const s = document.createElement('span');
  s.textContent = r;
  if (r === 1) s.className = 'sel';
  rows.append(s);
}

// Deviation in thousandths, one row per Y step, one value per X step
const dev = [
  [5.5, 2.5, -2, .4, 1.2, .4, 1.3, 3.2, 3.8, 4.2, 6.5],
  [5.5, 4.2, -.8, 0, .8, 1.5, 1.5, 2.2, 3.2, 3, 3.4],
  [6, 5.4, 2.8, 1.3, 2, 3.4, 3.2, 1.8, 1.6, 1.4, -1],
  [4.2, 3.2, 1.8, 1.6, 1.6, 2.4, 2.4, 1.6, 1.2, 0, -6.5],
  [-4.5, -3.6, -3, -3, -3.2, -3.6, -4.4, -5.4, -7, -9, -11.5],
  [-3.5, -3.5, -3.6, -4.6, -5.4, -5.8, -6.2, -6.4, -6.8, -7.4, -8],
  [-.5, .4, .4, -.4, -1, -1.4, -1.4, -.8, -.8, -1.4, -2.2],
  [-2, -1.2, -.4, .6, 1.4, -.2, -2, .2, 2.4, 1.6, 1.5],
  [-6, -3, -1.2, -.4, .3, -.5, -2.5, .3, 2.8, 4, 4.4],
  [-3.8, .3, 1.1, .2, -.3, -.3, .7, 2.5, 3, 4.3, 5],
  [-1.5, 2.1, 3, 1.5, .8, -.2, 1.5, 4.2, 4.8, 4.8, 4.1]
];

function cubic(p, t) {
  const n = p.length - 1, x = t * n, i = Math.min(n - 1, Math.floor(x)), f = x - i;
  const b = p[i], c = p[i + 1];
  const a = i > 0 ? p[i - 1] : 2 * b - c, d = i < n - 1 ? p[i + 2] : 2 * c - b;
  return b + .5 * f * (c - a + f * (2 * a - 5 * b + 4 * c - d + f * (3 * (b - c) + d - a)));
}
const height = (u, v) => cubic(dev.map(row => cubic(row, u)), v);

function turbo(z) {
  const x = Math.max(0, Math.min(1, (z + 12) / 24));
  const r = .13572138 + x * (4.6153926 + x * (-42.66032258 + x * (132.13108234 + x * (-152.94239396 + x * 59.28637943))));
  const g = .09140261 + x * (2.19418839 + x * (4.84296658 + x * (-14.18503333 + x * (4.27729857 + x * 2.82956604))));
  const b = .1066733 + x * (12.64194608 + x * (-60.58204836 + x * (110.36276771 + x * (-89.90310912 + x * 27.34824973))));
  return 'rgb(' + [r, g, b].map(k => Math.round(255 * Math.max(0, Math.min(1, k)))) + ')';
}

// Projects the unit square onto the quad p00, p10, p11, p01
function projector(p00, p10, p11, p01, scale) {
  const dx1 = p10[0] - p11[0], dx2 = p01[0] - p11[0], dx3 = p00[0] - p10[0] + p11[0] - p01[0];
  const dy1 = p10[1] - p11[1], dy2 = p01[1] - p11[1], dy3 = p00[1] - p10[1] + p11[1] - p01[1];
  const den = dx1 * dy2 - dx2 * dy1, g = (dx3 * dy2 - dx2 * dy3) / den, h = (dx1 * dy3 - dx3 * dy1) / den;
  return (u, v, z) => {
    const w = g * u + h * v + 1;
    const x = ((p10[0] - p00[0] + g * p10[0]) * u + (p01[0] - p00[0] + h * p01[0]) * v + p00[0]) / w;
    const y = ((p10[1] - p00[1] + g * p10[1]) * u + (p01[1] - p00[1] + h * p01[1]) * v + p00[1]) / w;
    return [x, y - z * scale];
  };
}
const views = {
  iso: { at: projector([577, 684], [1140, 450], [697, 189], [150, 388], 2.95), flipU: true },
  rot: { at: projector([135, 394], [537, 670], [1060, 450], [648, 200], 2.8), flipU: false }
};

const N = 80;
const z = [];
for (let j = 0; j <= N; j++) {
  z.push([]);
  for (let i = 0; i <= N; i++) z[j].push(height(i / N, j / N));
}
document.querySelectorAll('.surface').forEach(g => {
  const view = views[g.dataset.view];
  const at = (i, j) => view.at(i / N, j / N, z[j][i]).map(k => k.toFixed(1)).join(' ');
  let out = '';
  for (let j = N - 1; j >= 0; j--) {
    for (let k = 0; k < N; k++) {
      const i = view.flipU ? N - 1 - k : k;
      const mean = (z[j][i] + z[j][i + 1] + z[j + 1][i] + z[j + 1][i + 1]) / 4;
      const c = turbo(mean);
      out += `<path fill="${c}" stroke="${c}" d="M${at(i, j)}L${at(i + 1, j)}L${at(i + 1, j + 1)}L${at(i, j + 1)}z"/>`;
    }
  }
  g.innerHTML = out;
});
```
